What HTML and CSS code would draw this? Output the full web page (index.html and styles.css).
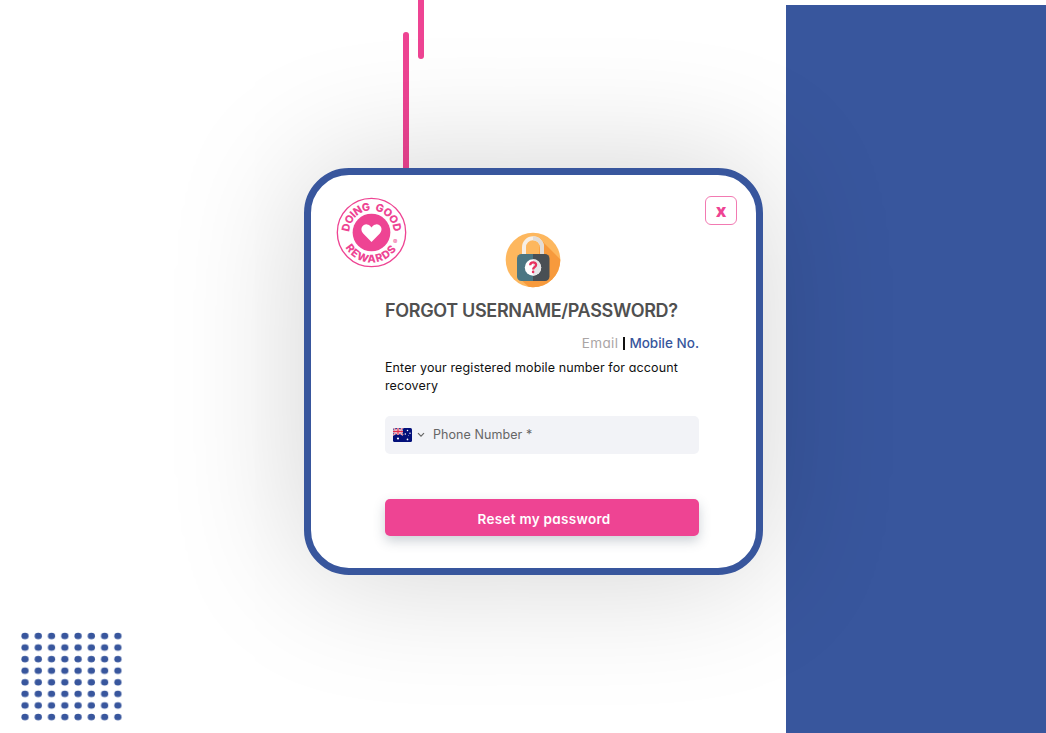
FILE: index.html
```html
<!DOCTYPE html>
<html lang="en">
<head>
<meta charset="utf-8">
<title>Forgot username/password</title>
<link rel="stylesheet" href="styles.css">
</head>
<body>
<div class="page">
  <div class="line line-top"></div>
  <div class="line line-card"></div>
  <svg class="dots" width="102" height="90">
    <defs>
      <pattern id="dot" width="13.27" height="11.58" patternUnits="userSpaceOnUse">
        <ellipse cx="4" cy="4" rx="3.6" ry="3.2" fill="#38569d"/>
      </pattern>
    </defs>
    <rect width="102" height="90" fill="url(#dot)"/>
  </svg>
  <main class="stage">
    <section class="card">
      <header class="card-head">
        <svg class="logo" viewBox="0 0 70 70">
          <defs>
            <path id="arc-top" d="M13.400 38a21.800 21.800 0 1 1 43.200 0"/>
            <path id="arc-bottom" d="M5.800 31a29.500 29.500 0 1 0 58.400 0"/>
          </defs>
          <circle cx="35" cy="35" r="33.700" fill="none" stroke="#ee4493" stroke-width="1.300"/>
          <circle cx="35" cy="35" r="18.600" fill="#ee4493"/>
          <path d="M35 44.300 26.800 36c-4-4.600-.2-9.300 3.600-9 2.200.1 3.700 1.500 4.600 3 .9-1.500 2.400-2.900 4.600-3 3.800-.3 7.600 4.400 3.600 9z" fill="#fff"/>
          <text class="logo-text logo-text-top"><textPath href="#arc-top" startOffset="50%" textLength="67">DOING GOOD</textPath></text>
          <text class="logo-text"><textPath href="#arc-bottom" startOffset="49%" textLength="60">REWARDS</textPath></text>
          <text class="logo-mark" x="58.500" y="46">®</text>
        </svg>
        <button class="close" type="button">x</button>
      </header>
      <div class="content">
        <svg class="lock" viewBox="0 0 56 56">
          <defs><clipPath id="disc"><circle cx="28" cy="28" r="27.300"/></clipPath></defs>
          <circle cx="28" cy="28" r="27.300" fill="#fdb75e"/>
          <path clip-path="url(#disc)" d="M35 7 56 28V56H25L14 46 28 30V22h6z" fill="#f79a3c"/>
          <path d="M19 24V15.200a9 9 0 0 1 18 0V24" fill="none" stroke="#f7efe6" stroke-width="4"/>
          <path d="M28 6.200a9 9 0 0 1 9 9V24" fill="none" stroke="#e2dcd6" stroke-width="4"/>
          <path d="M28 22H16.500a4.500 4.500 0 0 0-4.500 4.500v18a4.500 4.500 0 0 0 4.500 4.500H28z" fill="#4b7682"/>
          <path d="M28 22h12a4.500 4.500 0 0 1 4.500 4.500v18A4.500 4.500 0 0 1 40 49H28z" fill="#494f54"/>
          <circle cx="28" cy="35.500" r="8.200" fill="#fff"/>
          <path d="M28 27.300a8.200 8.200 0 0 1 0 16.400z" fill="#e6e6e8"/>
          <path d="M25.200 33.200c0-3.800 5.900-3.600 5.900-.4 0 2.300-3 2.300-3 4.600" fill="none" stroke="#e8325f" stroke-width="2.300"/>
          <circle cx="28.100" cy="39.900" r="1.300" fill="#e8325f"/>
        </svg>
        <h1 class="title">FORGOT USERNAME/PASSWORD?</h1>
        <nav class="tabs"><span class="tab-off">Email</span><span class="bar"></span><span class="tab-on">Mobile No.</span></nav>
        <p class="hint"><span class="hint-main">Enter your registered mobile number for account</span> <span class="hint-rest">recovery</span></p>
        <div class="field">
          <svg class="flag" viewBox="0 0 19 14">
            <defs><clipPath id="flag-clip"><rect width="19" height="14" rx="1.500"/></clipPath></defs>
            <g clip-path="url(#flag-clip)">
              <rect width="19" height="14" fill="#03107a"/>
              <path d="M0 0 10 7M10 0 0 7" stroke="#fff" stroke-width="1.800"/>
              <path d="M0 0 10 7M10 0 0 7" stroke="#e0304e" stroke-width=".8"/>
              <path d="M5 0v7M0 3.500h10" stroke="#fff" stroke-width="2.400"/>
              <path d="M5 0v7M0 3.500h10" stroke="#e0304e" stroke-width="1.300"/>
              <g fill="#fff">
                <circle cx="5" cy="10.500" r="1.100"/><circle cx="14.500" cy="2.500" r=".75"/>
                <circle cx="12.300" cy="6" r=".75"/><circle cx="17" cy="5.200" r=".75"/>
                <circle cx="14.500" cy="11.400" r=".85"/><circle cx="15.500" cy="7.300" r=".4"/>
              </g>
            </g>
          </svg>
          <svg class="chevron" viewBox="0 0 8 6"><path d="m1 1.200 3 3 3-3" fill="none" stroke="#666" stroke-width="1.200"/></svg>
          <span class="placeholder">Phone Number *</span>
        </div>
        <button class="submit" type="button">Reset my password</button>
      </div>
    </section>
  </main>
  <aside class="panel"></aside>
</div>
</body>
</html>
```
FILE: styles.css
```css
* { box-sizing: border-box; }
body {
  margin: 0;
  background: #fff;
  font-family: Inter, "Open Sans", sans-serif;
  font-feature-settings: "cv11";
}
h1, p { margin: 0; }
button { font: inherit; font-feature-settings: inherit; padding: 0; }
svg { display: block; flex: none; }
.page {
  position: relative;
  display: grid;
  grid-template-columns: 786px 1fr;
  height: 733px;
  overflow: hidden;
}
.panel { margin-top: 5px; background: #38569d; }
.stage { position: relative; z-index: 1; padding: 168px 0 0 304px; }
.card {
  width: 459px;
  height: 407px;
  border: 7px solid #38569d;
  border-radius: 45px;
  background: #fff;
  box-shadow: 0 0 135px rgba(0, 0, 0, .18);
}
.line { position: absolute; width: 6px; background: #ee4493; border-radius: 3px; }
.line-top { left: 418px; top: -10px; height: 69px; }
.line-card { left: 403px; top: 32px; height: 140px; }
.dots { position: absolute; left: 21px; top: 632px; }
.card-head {
  display: flex;
  justify-content: space-between;
  height: 57px;
  padding: 21px 19px 0 25px;
}
.logo { width: 71px; height: 71px; margin-top: 1px; }
.logo-text { font-size: 10.6px; font-weight: 800; fill: #ee4493; text-anchor: middle; }
.logo-text-top { word-spacing: 3px; }
.logo-mark { font-size: 6.5px; fill: #ee4493; text-anchor: middle; }
.close {
  width: 32px;
  height: 29px;
  border: 1px solid #f27ab2;
  border-radius: 6px;
  background: #fff;
  color: #ee4493;
  font-family: "Noto Sans", sans-serif;
  font-size: 17px;
  font-weight: 800;
  line-height: 28px;
}
.content { display: flex; flex-direction: column; width: 314px; margin-left: 74px; }
.lock { width: 56px; height: 56px; margin-left: 120px; }
.title {
  height: 28px;
  margin-top: 9px;
  color: #505050;
  font-size: 18px;
  font-weight: 600;
  line-height: 28px;
  letter-spacing: -.33px;
  white-space: nowrap;
}
.tabs {
  display: flex;
  align-items: center;
  justify-content: flex-end;
  height: 20px;
  margin-top: 8px;
  font-size: 13.5px;
  line-height: 20px;
  white-space: nowrap;
}
.tab-off { color: #aaa5a5; letter-spacing: .4px; }
.bar { width: 2px; height: 13px; margin: 0 4px 0 5px; background: #111; }
.tab-on { color: #38569d; font-weight: 500; }
.hint { height: 36px; margin-top: 6px; color: #111; font-size: 12.5px; line-height: 18px; letter-spacing: .11px; white-space: nowrap; }
.hint-main, .hint-rest { display: block; }
.field {
  display: flex;
  align-items: center;
  height: 38px;
  margin-top: 21px;
  padding: 0 8px;
  border-radius: 5px;
  background: #f2f3f7;
}
.flag { width: 19px; height: 14px; }
.chevron { width: 8px; height: 6px; margin: 0 8px 0 5px; }
.placeholder { padding-bottom: 2px; color: #666; font-size: 12.5px; letter-spacing: .07px; white-space: nowrap; }
.submit {
  height: 37px;
  margin-top: 45px;
  border: 0;
  border-radius: 5px;
  background: #ee4493;
  box-shadow: 0 5px 12px rgba(50, 70, 90, .25);
  color: #fff;
  font-size: 13.5px;
  font-weight: 600;
  line-height: 37px;
  padding: 2px 0 0 4px;
  letter-spacing: .3px;
}
```
